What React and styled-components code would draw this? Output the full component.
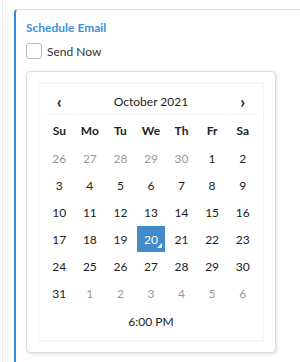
import React from "react";
import styled, { createGlobalStyle } from "styled-components";

const GlobalStyle = createGlobalStyle`
  body {
    margin: 0;
    background: #fff;
    font-family: Lato, "Open Sans", Arial, sans-serif;
    color: #333;
  }
`;

const Page = styled.div`
  height: 362px;
  margin-left: 2px;
  border-left: 1px solid #ececec;
  padding: 9px 0 0 11px;
  box-sizing: border-box;
  overflow: hidden;
`;

const Section = styled.div`
  height: 100%;
  box-sizing: border-box;
  border-top: 1px solid #dedede;
  border-left: 2px solid #2f8ce3;
  border-top-left-radius: 4px;
  padding: 11px 0 0 10px;
`;

const Title = styled.div`
  font-size: 12px;
  font-weight: 700;
  color: #3a90e0;
  line-height: 14px;
`;

const CheckRow = styled.label`
  display: flex;
  align-items: center;
  gap: 5px;
  margin-top: 8px;
  font-size: 12px;
  color: #333;
`;

const Box = styled.span`
  width: 14px;
  height: 14px;
  border: 1px solid #bdbdbd;
  border-radius: 3px;
  background: #fff;
`;

const Card = styled.div`
  margin-top: 12px;
  width: 250px;
  box-sizing: border-box;
  padding: 11px;
  border: 1px solid #dcdcdc;
  border-radius: 4px;
  box-shadow: 1px 1px 3px rgba(0, 0, 0, 0.12);
  background: #fff;
`;

const Picker = styled.div`
  border: 1px solid #f4f4f4;
  padding: 4px;
`;

const Table = styled.table`
  width: 100%;
  border-collapse: separate;
  border-spacing: 2px 1px;
  font-size: 12px;
  table-layout: fixed;
`;

const HeadCell = styled.th`
  height: 25px;
  border-bottom: 1px solid #f4f4f4;
  font-weight: ${(p) => (p.$arrow ? 700 : 400)};
  font-size: ${(p) => (p.$arrow ? "17px" : "12px")};
  color: #1e1e1e;
  text-align: center;
  padding: 0;
`;

const Dow = styled.th`
  height: 28px;
  font-weight: 700;
  color: #222;
  text-align: center;
  padding: 0;
`;

const Day = styled.td`
  position: relative;
  height: 26px;
  padding: 0;
  text-align: center;
  color: ${(p) => (p.$active ? "#fff" : p.$muted ? "#999" : "#222")};
  background: ${(p) => (p.$active ? "#428bca" : "transparent")};

  &::before {
    content: "";
    display: ${(p) => (p.$today ? "block" : "none")};
    position: absolute;
    right: 3px;
    bottom: 4px;
    border-left: 5px solid transparent;
    border-bottom: 5px solid ${(p) => (p.$active ? "#fff" : "#428bca")};
  }
`;

const TimeCell = styled.td`
  height: 28px;
  padding: 0;
  text-align: center;
  color: #222;
`;

const days = ["Su", "Mo", "Tu", "We", "Th", "Fr", "Sa"];

const weeks = [
  [26, 27, 28, 29, 30, 1, 2],
  [3, 4, 5, 6, 7, 8, 9],
  [10, 11, 12, 13, 14, 15, 16],
  [17, 18, 19, 20, 21, 22, 23],
  [24, 25, 26, 27, 28, 29, 30],
  [31, 1, 2, 3, 4, 5, 6],
];

export default function App() {
  return (
    <>
      <GlobalStyle />
      <Page>
        <Section>
          <Title>Schedule Email</Title>
          <CheckRow>
            <Box />
            Send Now
          </CheckRow>
          <Card>
            <Picker>
              <Table>
                <thead>
                  <tr>
                    <HeadCell $arrow>‹</HeadCell>
                    <HeadCell colSpan={5}>October 2021</HeadCell>
                    <HeadCell $arrow>›</HeadCell>
                  </tr>
                  <tr>
                    {days.map((d) => (
                      <Dow key={d}>{d}</Dow>
                    ))}
                  </tr>
                </thead>
                <tbody>
                  {weeks.map((week, wi) => (
                    <tr key={wi}>
                      {week.map((n, di) => {
                        const muted = (wi === 0 && n > 20) || (wi === 5 && n < 20);
                        const active = wi === 3 && n === 20;
                        return (
                          <Day key={di} $muted={muted} $active={active} $today={active}>
                            {n}
                          </Day>
                        );
                      })}
                    </tr>
                  ))}
                </tbody>
                <tfoot>
                  <tr>
                    <TimeCell colSpan={7}>6:00 PM</TimeCell>
                  </tr>
                </tfoot>
              </Table>
            </Picker>
          </Card>
        </Section>
      </Page>
    </>
  );
}
